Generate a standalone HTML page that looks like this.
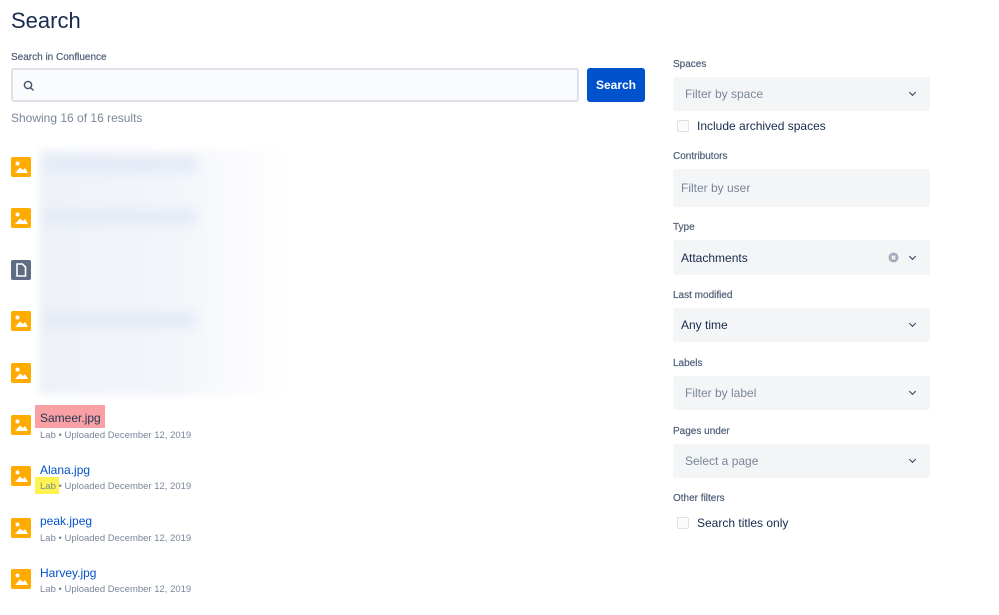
<!DOCTYPE html><html><head><style>
body{margin:0;width:999px;height:615px;background:#fff;font-family:"Liberation Sans",sans-serif;position:relative;overflow:hidden;color:#172B4D}
.a{position:absolute}
.lbl{font-size:10px;color:#505F79;-webkit-text-stroke:0.2px #505F79}
.sel{position:absolute;left:673px;width:257px;background:#F4F5F7;border-radius:3px;font-size:12px;color:#7A869A;box-sizing:border-box;padding-left:12px;display:flex;align-items:center}
.sel.v{color:#172B4D;padding-left:8px}
.chev{position:absolute;right:15px;top:50%;width:4px;height:4px;border-right:1.8px solid #253858;border-bottom:1.8px solid #253858;transform:rotate(45deg);margin-top:-4px}
.cb{position:absolute;left:677px;width:10px;height:10px;border:1.5px solid #DFE1E6;border-radius:2px;background:#FAFBFC}
.ct{position:absolute;left:697px;font-size:12px;color:#172B4D}
.ic{position:absolute;left:11px;width:20px;height:20px;border-radius:2px;background:#FFAB00}
.t{position:absolute;left:40px;font-size:12px;color:#0052CC}
.m{position:absolute;left:40px;font-size:9.5px;color:#7A869A}
</style></head><body>
<div class="a" style="left:11px;top:8px;font-size:22px;color:#172B4D">Search</div>
<div class="a lbl" style="left:11px;top:52px">Search in Confluence</div>
<div class="a" style="left:11px;top:68px;width:568px;height:34px;box-sizing:border-box;background:#FAFBFC;border:2px solid #DFE1E6;border-radius:3px">
<svg class="a" style="left:10px;top:10px" width="12" height="12" viewBox="0 0 12 12"><circle cx="5" cy="5" r="3.6" fill="none" stroke="#42526E" stroke-width="1.4"/><path d="M7.6 7.6L10.5 10.5" stroke="#42526E" stroke-width="1.4"/></svg></div>
<div class="a" style="left:587px;top:68px;width:58px;height:34px;background:#0052CC;border-radius:3px;color:#fff;font-size:12px;font-weight:bold;text-align:center;line-height:34px">Search</div>
<div class="a" style="left:11px;top:111px;font-size:12px;color:#7A869A">Showing 16 of 16 results</div>

<div class="a" style="left:39px;top:150px;width:250px;height:245px;background:linear-gradient(90deg,#eef2f8 0%,#f3f5fa 55%,#fff 100%);filter:blur(4px)"></div>
<div class="a" style="left:45px;top:158px;width:150px;height:14px;background:#e3eaf6;filter:blur(5px)"></div>
<div class="a" style="left:45px;top:210px;width:150px;height:14px;background:#e3eaf6;filter:blur(5px)"></div>
<div class="a" style="left:45px;top:313px;width:150px;height:14px;background:#e3eaf6;filter:blur(5px)"></div>

<svg width="0" height="0" style="position:absolute"><defs><g id="img"><circle cx="6.5" cy="6.5" r="2" fill="#fff"/><path d="M4 16L9 10.5L12 13L14 11L17 16Z" fill="#fff"/></g></defs></svg>
<div class="ic" style="top:157px"><svg width="20" height="20"><use href="#img"/></svg></div>
<div class="ic" style="top:208px"><svg width="20" height="20"><use href="#img"/></svg></div>
<div class="ic" style="top:260px;background:#5E6C84"><svg width="20" height="20"><path d="M6 4H11.5L14.5 7V16H6Z" fill="none" stroke="#fff" stroke-width="1.6"/></svg></div>
<div class="ic" style="top:311px"><svg width="20" height="20"><use href="#img"/></svg></div>
<div class="ic" style="top:363px"><svg width="20" height="20"><use href="#img"/></svg></div>
<div class="ic" style="top:415px"><svg width="20" height="20"><use href="#img"/></svg></div>
<div class="ic" style="top:466px"><svg width="20" height="20"><use href="#img"/></svg></div>
<div class="ic" style="top:518px"><svg width="20" height="20"><use href="#img"/></svg></div>
<div class="ic" style="top:569px"><svg width="20" height="20"><use href="#img"/></svg></div>

<div class="a" style="left:35px;top:405px;width:70px;height:23px;background:#F8A0A4"></div>
<div class="t" style="top:411px;color:#253858">Sameer.jpg</div>
<div class="m" style="top:430px">Lab • Uploaded December 12, 2019</div>
<div class="t" style="top:463px">Alana.jpg</div>
<div class="a" style="left:35px;top:477px;width:24px;height:17px;background:#FFF44F"></div>
<div class="m" style="top:481px">Lab • Uploaded December 12, 2019</div>
<div class="t" style="top:514px">peak.jpeg</div>
<div class="m" style="top:533px">Lab • Uploaded December 12, 2019</div>
<div class="t" style="top:566px">Harvey.jpg</div>
<div class="m" style="top:584px">Lab • Uploaded December 12, 2019</div>

<div class="a lbl" style="left:673px;top:59px">Spaces</div>
<div class="sel" style="top:77px;height:34px">Filter by space<span class="chev"></span></div>
<div class="cb" style="top:120px"></div><div class="ct" style="top:119px">Include archived spaces</div>
<div class="a lbl" style="left:673px;top:151px">Contributors</div>
<div class="sel v" style="top:169px;height:38px;color:#7A869A">Filter by user</div>
<div class="a lbl" style="left:673px;top:222px">Type</div>
<div class="sel v" style="top:240px;height:35px">Attachments
<svg class="a" style="right:31px;top:12px" width="11" height="11"><circle cx="5.5" cy="5.5" r="5" fill="#A5ADBA"/><path d="M3.7 3.7L7.3 7.3M7.3 3.7L3.7 7.3" stroke="#fff" stroke-width="1.3"/></svg><span class="chev"></span></div>
<div class="a lbl" style="left:673px;top:290px">Last modified</div>
<div class="sel v" style="top:308px;height:34px">Any time<span class="chev"></span></div>
<div class="a lbl" style="left:673px;top:358px">Labels</div>
<div class="sel" style="top:376px;height:34px">Filter by label<span class="chev"></span></div>
<div class="a lbl" style="left:673px;top:426px">Pages under</div>
<div class="sel" style="top:444px;height:34px">Select a page<span class="chev"></span></div>
<div class="a lbl" style="left:673px;top:493px">Other filters</div>
<div class="cb" style="top:517px"></div><div class="ct" style="top:516px">Search titles only</div>
</body></html>
